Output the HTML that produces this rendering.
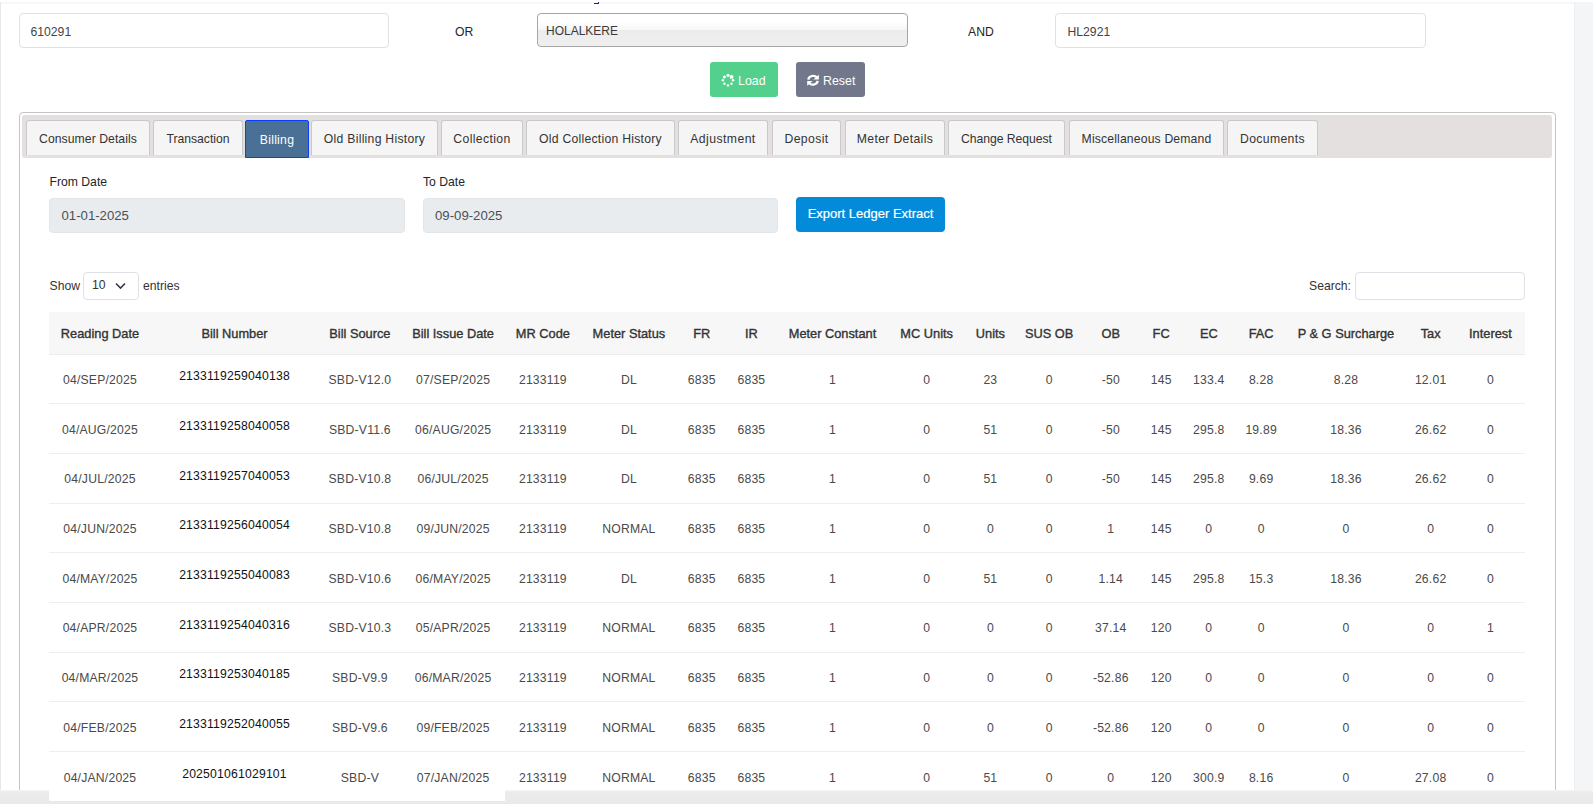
<!DOCTYPE html>
<html><head><meta charset="utf-8">
<style>
*{box-sizing:border-box;margin:0;padding:0}
html,body{width:1593px;height:804px;overflow:hidden;background:#fff}
body{position:relative;font-family:"Liberation Sans",sans-serif;font-size:12.2px;color:#212529}
.a{position:absolute}
.t{position:absolute;line-height:14px;white-space:nowrap}
.inp{position:absolute;border:1px solid #dee2e6;border-radius:4px;background:#fff}
.tab{position:absolute;top:120px;height:35px;background:#f5f5f5;border:1px solid #c9c9c9;border-bottom:none;border-radius:3px 3px 0 0;color:#333;text-align:center;line-height:37px;white-space:nowrap}
.tab.act{background:#4b7095;border:1px solid #0a3dff;border-bottom:1px solid #0a3dff;height:38px;color:#fff;line-height:38px;border-radius:2px 2px 0 0}
table{position:absolute;left:49px;top:312px;width:1475.5px;border-collapse:collapse;table-layout:fixed}
th{height:42px;background:#f7f7f7;color:#333;font-weight:normal;font-size:12.8px;-webkit-text-stroke:0.35px #333;text-align:center;vertical-align:middle;border-bottom:1px solid #eaecef;white-space:nowrap;padding:2px 0 0 0}
td{text-align:center;vertical-align:middle;color:#4a4a4a;letter-spacing:0.2px;border-bottom:1px solid #eceef1;white-space:nowrap;padding:2px 0 0 0}
tr.lo td{padding-top:4px}
td.bn{color:#111}
td.bn span{position:relative;top:-4px}
tr.bnlo td.bn span{top:-3px}
</style></head><body>
<!-- page chrome -->
<div class="a" style="left:0;top:2px;width:1px;height:790px;background:#e6e8eb"></div>
<div class="a" style="left:1px;top:2px;width:1573px;height:3px;background:linear-gradient(#f3f3f3,#fbfbfb 60%,#fff)"></div>
<div class="a" style="left:1574px;top:2px;width:19px;height:790px;background:#f4f5f7;border-left:1px solid #edeef1"></div>
<div class="a" style="left:594px;top:3px;width:4px;height:1px;background:#2a2a3a"></div><div class="a" style="left:597.5px;top:2px;width:1.5px;height:1.5px;background:#2a2a6a"></div>

<!-- search row -->
<div class="inp" style="left:19px;top:13px;width:370px;height:35px"></div>
<div class="t" style="left:30.5px;top:25px;color:#444">610291</div>
<div class="t" style="left:455px;top:25px;color:#212529">OR</div>
<div class="a" style="left:537px;top:13px;width:371px;height:34px;border:1px solid #a6a6a6;border-radius:4px;background:linear-gradient(#fff 0%,#fff 22%,#f6f6f6 50%,#ececec 51%,#efefef 100%)"></div>
<div class="t" style="left:546px;top:23.5px;color:#3a3a3a;font-size:12px">HOLALKERE</div>
<div class="t" style="left:968px;top:24.5px;color:#212529">AND</div>
<div class="inp" style="left:1055px;top:13px;width:371px;height:35px"></div>
<div class="t" style="left:1067.5px;top:25px;color:#444">HL2921</div>

<!-- buttons -->
<div class="a" style="left:710px;top:62px;width:68px;height:35px;background:#52d08c;border-radius:3px"></div>
<svg class="a" style="left:721px;top:73px" width="14" height="14" viewBox="0 0 14 14">
 <g fill="#fff">
  <circle cx="7" cy="2.3" r="1.6"/><circle cx="10.6" cy="3.9" r="1.9"/><circle cx="12.1" cy="7.3" r="1.3"/>
  <circle cx="10.5" cy="10.8" r="1.2"/><circle cx="7" cy="12.4" r="1.2"/><circle cx="3.4" cy="10.8" r="1.2"/>
  <circle cx="1.9" cy="7.3" r="1.2"/><circle cx="3.4" cy="3.9" r="1.5"/>
 </g></svg>
<div class="t" style="left:738px;top:74px;color:#fff;font-size:12.4px">Load</div>
<div class="a" style="left:796px;top:62px;width:69px;height:35px;background:#72778b;border-radius:3px"></div>
<svg class="a" style="left:806px;top:74px" width="14" height="12.5" viewBox="0 0 14 14" preserveAspectRatio="none">
 <path d="M2.3 6.3 A4.9 4.9 0 0 1 10.9 3.8" fill="none" stroke="#fff" stroke-width="2.4"/>
 <path d="M12.8 0.8 L12.8 6.2 L7.4 6.2 Z" fill="#fff"/>
 <path d="M11.7 7.7 A4.9 4.9 0 0 1 3.1 10.2" fill="none" stroke="#fff" stroke-width="2.4"/>
 <path d="M1.2 13.2 L1.2 7.8 L6.6 7.8 Z" fill="#fff"/>
</svg>
<div class="t" style="left:823px;top:74px;color:#fff;font-size:12.4px">Reset</div>

<!-- tabs container -->
<div class="a" style="left:19px;top:112px;width:1537px;height:700px;border:1px solid #c5c5c5;border-radius:4px"></div>
<div class="a" style="left:22px;top:115px;width:1530px;height:43px;background:#e3e0df;border-radius:3px"></div>
<div class="tab" style="left:26px;width:124px;letter-spacing:0.060px">Consumer Details</div>
<div class="tab" style="left:153px;width:90px;letter-spacing:-0.030px">Transaction</div>
<div class="tab act" style="left:245px;width:64px;letter-spacing:0.267px">Billing</div>
<div class="tab" style="left:311px;width:127px;letter-spacing:0.272px">Old Billing History</div>
<div class="tab" style="left:441px;width:82px;letter-spacing:0.389px">Collection</div>
<div class="tab" style="left:526px;width:149px;letter-spacing:0.257px">Old Collection History</div>
<div class="tab" style="left:678px;width:90px;letter-spacing:0.444px">Adjustment</div>
<div class="tab" style="left:772px;width:69px;letter-spacing:0.383px">Deposit</div>
<div class="tab" style="left:845px;width:100px;letter-spacing:0.350px">Meter Details</div>
<div class="tab" style="left:948px;width:117px;letter-spacing:-0.038px">Change Request</div>
<div class="tab" style="left:1069px;width:155px;letter-spacing:0.158px">Miscellaneous Demand</div>
<div class="tab" style="left:1227px;width:91px;letter-spacing:0.362px">Documents</div>

<!-- dates -->
<div class="t" style="left:49.5px;top:174.5px;color:#212529">From Date</div>
<div class="t" style="left:423px;top:174.5px;color:#212529">To Date</div>
<div class="a" style="left:49px;top:198px;width:356px;height:35px;background:#e9ecef;border:1px solid #e3e6e9;border-radius:4px"></div>
<div class="t" style="left:61.5px;top:208.5px;color:#495057;font-size:13.2px">01-01-2025</div>
<div class="a" style="left:423px;top:198px;width:355px;height:35px;background:#e9ecef;border:1px solid #e3e6e9;border-radius:4px"></div>
<div class="t" style="left:435px;top:208.5px;color:#495057;font-size:13.2px">09-09-2025</div>
<div class="a" style="left:796px;top:197px;width:149px;height:35px;background:#038ad9;border-radius:4px"></div>
<div class="t" style="left:796px;width:149px;text-align:center;top:207px;color:#fff;font-size:13px;-webkit-text-stroke:0.2px #fff">Export Ledger Extract</div>

<!-- show / search -->
<div class="t" style="left:49.5px;top:278.5px;color:#333">Show</div>
<div class="inp" style="left:83px;top:272px;width:56px;height:28px"></div>
<div class="t" style="left:92px;top:278px;color:#333">10</div>
<svg class="a" style="left:115px;top:282px" width="11" height="8" viewBox="0 0 11 8"><path d="M1 1.5 L5.5 6 L10 1.5" fill="none" stroke="#343a40" stroke-width="1.6"/></svg>
<div class="t" style="left:143px;top:278.5px;color:#333">entries</div>
<div class="t" style="left:1309px;top:279px;color:#333">Search:</div>
<div class="inp" style="left:1355px;top:272px;width:170px;height:28px"></div>

<!-- table -->
<table>
<colgroup>
<col style="width:102px"><col style="width:167px"><col style="width:83.8px"><col style="width:102.6px"><col style="width:77px"><col style="width:95px"><col style="width:50.8px"><col style="width:48.4px"><col style="width:113.8px"><col style="width:74.6px"><col style="width:52.8px"><col style="width:64.8px"><col style="width:58.4px"><col style="width:42.4px"><col style="width:53px"><col style="width:51.6px"><col style="width:118px"><col style="width:51.4px"><col style="width:68.1px">
</colgroup>
<thead><tr><th>Reading Date</th><th>Bill Number</th><th>Bill Source</th><th>Bill Issue Date</th><th>MR Code</th><th>Meter Status</th><th>FR</th><th>IR</th><th>Meter Constant</th><th>MC Units</th><th>Units</th><th>SUS OB</th><th>OB</th><th>FC</th><th>EC</th><th>FAC</th><th>P &amp; G Surcharge</th><th>Tax</th><th>Interest</th></tr></thead>
<tbody>
<tr style="height:49px"><td>04/SEP/2025</td><td class="bn"><span>2133119259040138</span></td><td>SBD-V12.0</td><td>07/SEP/2025</td><td>2133119</td><td>DL</td><td>6835</td><td>6835</td><td>1</td><td>0</td><td>23</td><td>0</td><td>-50</td><td>145</td><td>133.4</td><td>8.28</td><td>8.28</td><td>12.01</td><td>0</td></tr>
<tr class="lo" style="height:50px"><td>04/AUG/2025</td><td class="bn"><span>2133119258040058</span></td><td>SBD-V11.6</td><td>06/AUG/2025</td><td>2133119</td><td>DL</td><td>6835</td><td>6835</td><td>1</td><td>0</td><td>51</td><td>0</td><td>-50</td><td>145</td><td>295.8</td><td>19.89</td><td>18.36</td><td>26.62</td><td>0</td></tr>
<tr class="bnlo" style="height:50px"><td>04/JUL/2025</td><td class="bn"><span>2133119257040053</span></td><td>SBD-V10.8</td><td>06/JUL/2025</td><td>2133119</td><td>DL</td><td>6835</td><td>6835</td><td>1</td><td>0</td><td>51</td><td>0</td><td>-50</td><td>145</td><td>295.8</td><td>9.69</td><td>18.36</td><td>26.62</td><td>0</td></tr>
<tr style="height:49px"><td>04/JUN/2025</td><td class="bn"><span>2133119256040054</span></td><td>SBD-V10.8</td><td>09/JUN/2025</td><td>2133119</td><td>NORMAL</td><td>6835</td><td>6835</td><td>1</td><td>0</td><td>0</td><td>0</td><td>1</td><td>145</td><td>0</td><td>0</td><td>0</td><td>0</td><td>0</td></tr>
<tr class="lo" style="height:50px"><td>04/MAY/2025</td><td class="bn"><span>2133119255040083</span></td><td>SBD-V10.6</td><td>06/MAY/2025</td><td>2133119</td><td>DL</td><td>6835</td><td>6835</td><td>1</td><td>0</td><td>51</td><td>0</td><td>1.14</td><td>145</td><td>295.8</td><td>15.3</td><td>18.36</td><td>26.62</td><td>0</td></tr>
<tr class="bnlo" style="height:50px"><td>04/APR/2025</td><td class="bn"><span>2133119254040316</span></td><td>SBD-V10.3</td><td>05/APR/2025</td><td>2133119</td><td>NORMAL</td><td>6835</td><td>6835</td><td>1</td><td>0</td><td>0</td><td>0</td><td>37.14</td><td>120</td><td>0</td><td>0</td><td>0</td><td>0</td><td>1</td></tr>
<tr style="height:49px"><td>04/MAR/2025</td><td class="bn"><span>2133119253040185</span></td><td>SBD-V9.9</td><td>06/MAR/2025</td><td>2133119</td><td>NORMAL</td><td>6835</td><td>6835</td><td>1</td><td>0</td><td>0</td><td>0</td><td>-52.86</td><td>120</td><td>0</td><td>0</td><td>0</td><td>0</td><td>0</td></tr>
<tr class="lo" style="height:50px"><td>04/FEB/2025</td><td class="bn"><span>2133119252040055</span></td><td>SBD-V9.6</td><td>09/FEB/2025</td><td>2133119</td><td>NORMAL</td><td>6835</td><td>6835</td><td>1</td><td>0</td><td>0</td><td>0</td><td>-52.86</td><td>120</td><td>0</td><td>0</td><td>0</td><td>0</td><td>0</td></tr>
<tr class="lo" style="height:50px"><td>04/JAN/2025</td><td class="bn"><span>202501061029101</span></td><td>SBD-V</td><td>07/JAN/2025</td><td>2133119</td><td>NORMAL</td><td>6835</td><td>6835</td><td>1</td><td>0</td><td>51</td><td>0</td><td>0</td><td>120</td><td>300.9</td><td>8.16</td><td>0</td><td>27.08</td><td>0</td></tr>
</tbody>
</table>

<!-- bottom scrollbar -->
<div class="a" style="left:0;top:790px;width:1593px;height:14px;background:linear-gradient(#f6f6f6,#ebebeb 2px,#e9e9e9)"></div>
<div class="a" style="left:49px;top:790px;width:456px;height:11px;background:#fff"></div>
</body></html>
